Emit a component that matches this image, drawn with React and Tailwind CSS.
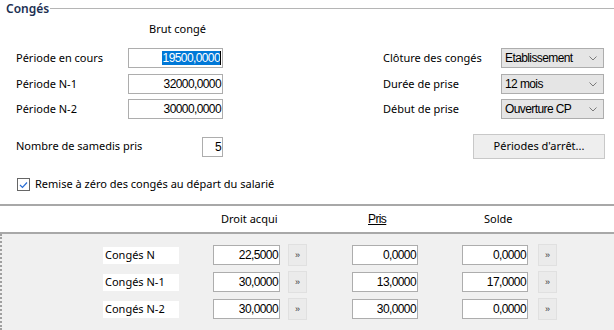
import React from 'react'

const ui = { fontFamily: '"Noto Sans", "Open Sans", sans-serif' }
const num = { fontFamily: '"Liberation Sans", Arial, sans-serif' }

function Field({ value, w = 'w-[95px]', selected }) {
  return (
    <div
      className={`${w} h-[20px] bg-white border border-[#adadad] flex items-center justify-end pr-[1px] text-[12px] text-black tracking-[-0.6px]`}
      style={num}
    >
      {selected ? (
        <>
          <span className="bg-[#0078d7] text-white leading-[14px] pl-[1px]">{value}</span>
          <span className="w-[1px] h-[14px] bg-black" />
        </>
      ) : (
        value
      )}
    </div>
  )
}

function Select({ value }) {
  return (
    <div
      className="w-[103px] h-[20px] bg-[#e5e5e5] border border-[#adadad] flex items-center pl-[3px] pr-[6px] text-[12px] text-black tracking-[-0.6px]"
      style={num}
    >
      <span className="flex-1">{value}</span>
      <svg width="8" height="5" viewBox="0 0 8 5">
        <polyline points="0.5,0.5 4,4 7.5,0.5" fill="none" stroke="#7a7a7a" strokeWidth="1" />
      </svg>
    </div>
  )
}

function Arrow() {
  return (
    <div className="w-[19px] h-[22px] bg-[#ebebeb] border border-[#e0e0e0] flex items-center justify-center text-[9px] text-[#333] leading-none" style={num}>
      »
    </div>
  )
}

const rows = [
  { label: 'Congés N', droit: '22,5000', pris: '0,0000', solde: '0,0000' },
  { label: 'Congés N-1', droit: '30,0000', pris: '13,0000', solde: '17,0000' },
  { label: 'Congés N-2', droit: '30,0000', pris: '30,0000', solde: '0,0000' },
]

export default function App() {
  return (
    <div className="w-[614px] h-[330px] bg-white overflow-hidden text-[11px] text-black flex flex-col" style={ui}>
      {/* Group title */}
      <div className="h-[18px] flex items-center pl-[6px]">
        <span className="font-semibold text-[12px] text-[#1c2f52] leading-none">Congés</span>
        <div className="flex-1 h-[1px] bg-[#b5b5b5] ml-[1px] -mt-[1px]" />
      </div>

      <div className="pl-4">
        <div className="mt-[3px] h-[16px] flex items-center pl-[133px]">Brut congé</div>

        {[
          { label: 'Période en cours', value: '19500,0000', selected: true, rl: 'Clôture des congés', sv: 'Etablissement', mt: 'mt-[11px]' },
          { label: 'Période N-1', value: '32000,0000', rl: 'Durée de prise', sv: '12 mois', mt: 'mt-[6px]' },
          { label: 'Période N-2', value: '30000,0000', rl: 'Début de prise', sv: 'Ouverture CP', mt: 'mt-[5px]' },
        ].map(r => (
          <div key={r.label} className={`${r.mt} h-[20px] flex items-center`}>
            <span className="w-[112px]">{r.label}</span>
            <Field value={r.value} selected={r.selected} />
            <span className="ml-[160px] w-[118px]">{r.rl}</span>
            <Select value={r.sv} />
          </div>
        ))}

        <div className="mt-[15px] h-[25px] flex items-center">
          <span className="w-[186px]">Nombre de samedis pris</span>
          <Field value="5" w="w-[21px]" />
          <button className="ml-[250px] w-[132px] h-[25px] bg-[#eeeeee] border border-[#c8c8c8] text-[11px]">
            Périodes d'arrêt...
          </button>
        </div>

        <div className="mt-[19px] h-[13px] flex items-center ml-[1px]">
          <div className="w-[13px] h-[13px] border border-[#666] bg-white flex items-center justify-center">
            <svg width="9" height="8" viewBox="0 0 9 8">
              <polyline points="1,4 3.5,6.5 8,1.5" fill="none" stroke="#2a6ed4" strokeWidth="1.2" />
            </svg>
          </div>
          <span className="ml-[5px]">Remise à zéro des congés au départ du salarié</span>
        </div>
      </div>

      <div className="mt-[13px] h-[2px] bg-[#a8a8a8]" />

      {/* Table header */}
      <div className="h-[26px] flex items-center">
        <span className="ml-[221px] w-[147px]">Droit acqui</span>
        <span className="w-[116px] underline text-[12px] tracking-[-0.6px]" style={num}>Pris</span>
        <span>Solde</span>
      </div>
      <div className="h-[2px] bg-[#a8a8a8]" />

      <div className="flex-1 bg-[#f0f0f0] border-l-2 border-dotted border-[#a0a0a0] pt-[10px] flex flex-col gap-[5px]">
        {rows.map(r => (
          <div key={r.label} className="h-[22px] flex items-center">
            <span className="ml-[101px] w-[76px] h-[17px] bg-white pl-[2px] flex items-center">{r.label}</span>
            <div className="ml-[34px]"><Field value={r.droit} w="w-[67px]" /></div>
            <div className="ml-[8px]"><Arrow /></div>
            <div className="ml-[45px]"><Field value={r.pris} w="w-[66px]" /></div>
            <div className="ml-[44px]"><Field value={r.solde} w="w-[66px]" /></div>
            <div className="ml-[10px]"><Arrow /></div>
          </div>
        ))}
      </div>
    </div>
  )
}
